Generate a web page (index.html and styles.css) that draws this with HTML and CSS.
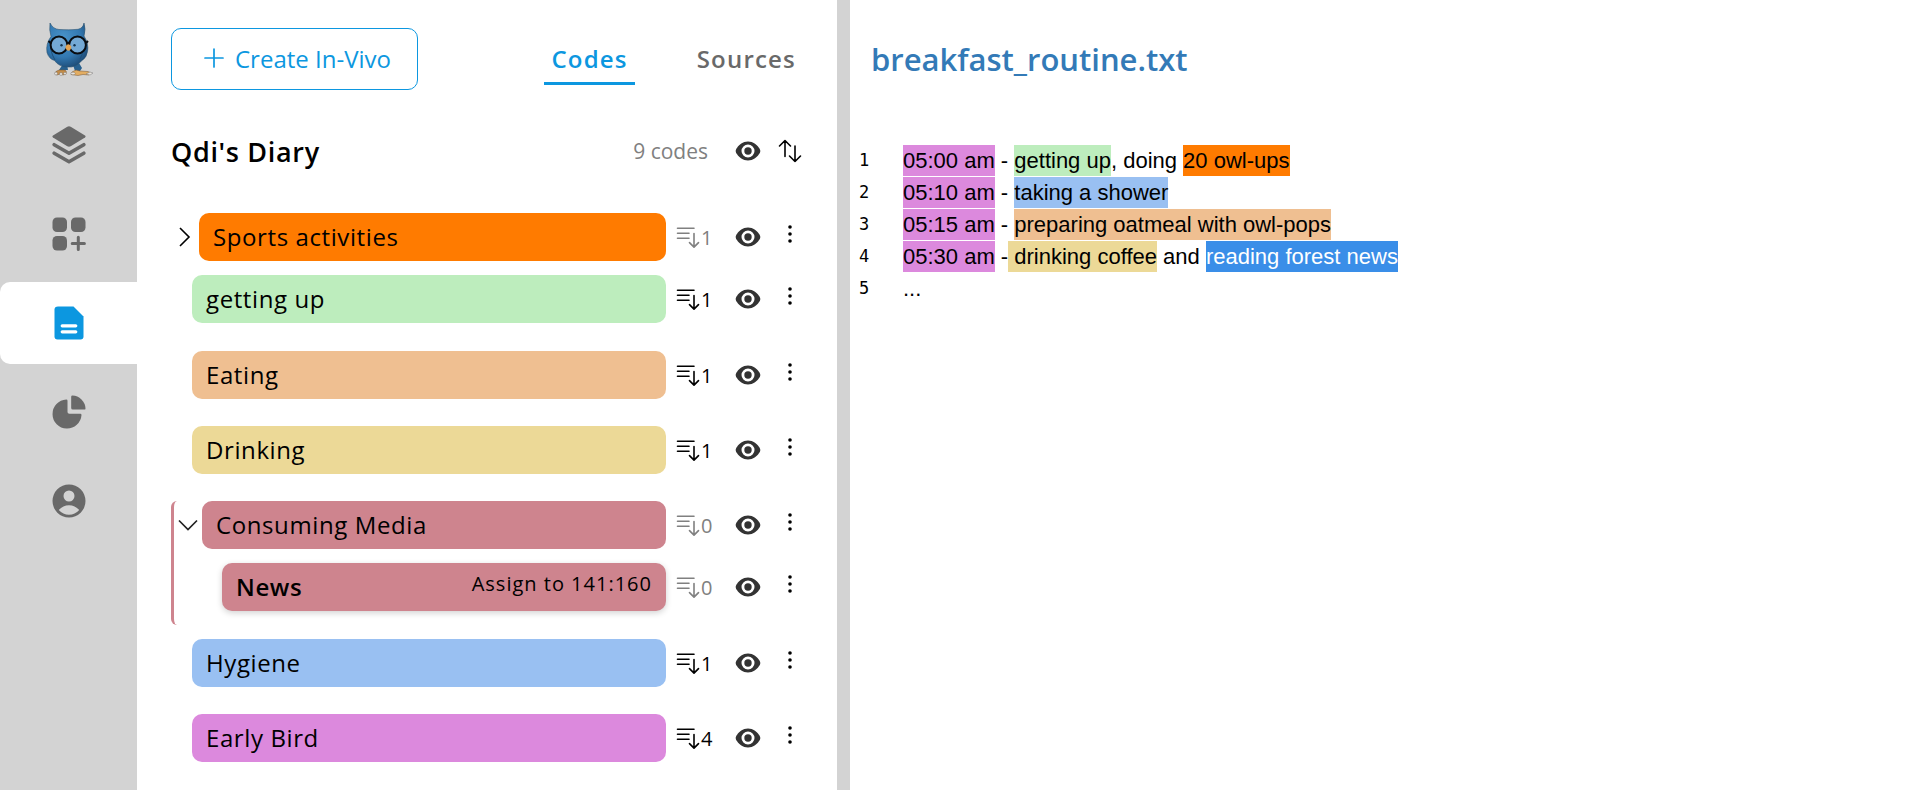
FILE: index.html
```html
<!DOCTYPE html>
<html lang="en">
<head>
<meta charset="utf-8">
<title>Qdi's Diary - Coding</title>
<link rel="stylesheet" href="styles.css">
</head>
<body>
<svg class="sprite" aria-hidden="true">
  <symbol id="i-eye" viewBox="0 0 26 20"><path fill="#333" fill-rule="evenodd" d="M.7 10C.7 8.800 1.200 7.900 2.100 6.700 4.200 3.700 7.700.5 13 .5s8.800 3.200 10.900 6.200c.9 1.200 1.400 2.100 1.400 3.300s-.5 2.100-1.400 3.300c-2.100 3-5.600 6.200-10.900 6.200s-8.800-3.200-10.900-6.200C1.200 12.100.7 11.200.7 10ZM13 3.500a6.500 6.500 0 1 0 0 13 6.500 6.500 0 0 0 0-13Z"/><circle cx="13" cy="10" r="3.700" fill="#333"/></symbol>
  <symbol id="i-list" viewBox="0 0 24 24"><g fill="none" stroke="currentColor" stroke-width="1.600" stroke-linecap="round" stroke-linejoin="round"><path d="M1.500 3.300h16.500M1.500 8.200h11.500M1.500 13.200h11.500M18 8.500v13.300M13.500 17.600l4.500 4.500 4.500-4.500"/></g></symbol>
  <symbol id="i-dots" viewBox="0 0 8 24"><circle cx="4" cy="2" r="1.800"/><circle cx="4" cy="9" r="1.800"/><circle cx="4" cy="16" r="1.800"/></symbol>
</svg>
<div class="app">
  <nav class="rail" aria-label="Main">
    <a class="logo" href="#" aria-label="Home">
      <svg width="50" height="56" viewBox="0 0 50 56">
        <defs>
          <radialGradient id="owl" cx=".4" cy=".35" r=".7"><stop offset="0" stop-color="#4a94cb"/><stop offset=".6" stop-color="#3379b2"/><stop offset="1" stop-color="#1d4a75"/></radialGradient>
        </defs>
        <path d="M19 43l-4 6h9l-1-6ZM29 44l2 6h5l2-3-3-5Z" fill="#27608f"/>
        <path d="M11 53q0-3 4-4h6q2 1 1 4l-3 1-3-1-3 1Z" fill="#c48d4a" stroke="#765433" stroke-width=".5"/>
        <path d="M28 51l4-2 4 1 8 .5 3 1.500-2 2-6-.5-5 1-7-1Z" fill="#e3ad62" stroke="#765433" stroke-width=".5"/>
        <g fill="#e8e4df" stroke="#666" stroke-width=".4"><circle cx="12" cy="52.500" r="1.500"/><circle cx="17" cy="53" r="1.500"/><circle cx="21" cy="52.500" r="1.300"/><ellipse cx="29" cy="52.500" rx="2.200" ry="1.300"/><path d="M42 53l4-2 3 1-3 2Z"/></g>
        <path d="M6 2q3 6 9 6.500 10 .8 19-.2 5-1 6-6.300 2 6 0 13 5 8 3.500 15.500Q42.500 37 38 39.500 31 47 24 46 15 46 10.500 39.500 5 38 3 31.500 1.500 23 7 15.500 5 9 6 2Z" fill="url(#owl)" stroke="#28516f" stroke-width=".6"/>
        <path d="M7 20Q5 29 11 39M39 20q2 9-3 18" fill="none" stroke="#1c4c75" stroke-width=".9"/>
        <g fill="#74a9d5" stroke="#090d12" stroke-width="2"><circle cx="15" cy="24" r="8.400"/><circle cx="33.500" cy="24" r="8.400"/></g>
        <path d="M23 22.500q1.500-1.500 3 0M6.500 22l-2-2M42 22l2-2" fill="none" stroke="#090d12" stroke-width="2"/>
        <circle cx="17.500" cy="24.300" r="1.200" fill="#14334d"/><circle cx="30.500" cy="24.300" r="1.200" fill="#14334d"/>
        <path d="M21.500 25.500q2.700-4.500 5.800 0-.2 4-3 4.300-2.600-.6-2.800-4.300Z" fill="#e3a352"/>
      </svg>
    </a>
    <a class="rail-item" href="#" aria-label="Projects">
      <svg width="34" height="38" viewBox="0 0 34 38"><path d="M15.300.7q1.700-.9 3.400 0L33 9.600q1.200 1 0 2L18.700 20.300q-1.700.9-3.400 0L1 11.600q-1.200-1 0-2Z"/><path d="M2.200 18.700 17 27.200l14.800-8.500M2.200 27.200 17 35.700l14.800-8.500" fill="none" stroke="#696969" stroke-width="3.600" stroke-linecap="round" stroke-linejoin="round"/></svg>
    </a>
    <a class="rail-item" href="#" aria-label="Preparation">
      <svg width="34" height="34" viewBox="0 0 34 34"><rect x=".5" y=".5" width="14.500" height="14.500" rx="4.500"/><rect x="19" y=".5" width="14.500" height="14.500" rx="4.500"/><rect x=".5" y="19" width="14.500" height="14.500" rx="4.500"/><path d="M26.300 20.300v12.200M20.200 26.400h12.200" fill="none" stroke="#696969" stroke-width="3" stroke-linecap="round"/></svg>
    </a>
    <a class="rail-item active" href="#" aria-label="Coding" aria-current="page">
      <svg width="30" height="34" viewBox="0 0 30 34"><path d="M4 .5h15.500L29.500 10.500V30.500q0 3-3 3H3.500q-3 0-3-3v-27q0-3 3.500-3Z"/><path d="M8.200 19.800h13.600M8.200 25.800h13.600" stroke="#fff" stroke-width="3.200" stroke-linecap="round"/></svg>
    </a>
    <a class="rail-item" href="#" aria-label="Analysis">
      <svg width="34" height="34" viewBox="0 0 34 34"><path d="M14.300 4.500q1.200 0 1.200 1.200V17q0 1.800 1.800 1.800h11q1.200 0 1.200 1.200A14.500 14.500 0 1 1 14.300 4.500Z"/><path d="M19.200 1.800Q19.200.6 20.400.6A13.500 13.500 0 0 1 33.500 13.400q0 1.200-1.200 1.200H20.700q-1.500 0-1.500-1.500Z"/></svg>
    </a>
    <a class="rail-item" href="#" aria-label="Profile">
      <svg width="34" height="34" viewBox="0 0 34 34"><path fill-rule="evenodd" d="M17 .5a16.500 16.500 0 1 0 0 33 16.500 16.500 0 0 0 0-33ZM17 6.500a5.500 5.500 0 1 1 0 11 5.500 5.500 0 0 1 0-11ZM6.800 26Q11 21.200 17 21.200T27.200 26Q23 30.700 17 30.700T6.800 26Z"/></svg>
    </a>
  </nav>

  <section class="codes-panel">
    <header class="panel-head">
      <button class="create" type="button"><svg width="20" height="20" viewBox="0 0 20 20"><path d="M10 1v18M1 10h18" stroke="currentColor" stroke-width="1.700" stroke-linecap="round"/></svg>Create In-Vivo</button>
      <div class="tabs" role="tablist">
        <button class="tab selected" type="button" role="tab" aria-selected="true">Codes</button>
        <button class="tab" type="button" role="tab" aria-selected="false">Sources</button>
      </div>
    </header>

    <div class="project">
      <h2>Qdi's Diary</h2>
      <span class="total">9 codes</span>
      <button class="icon-btn eye" type="button" aria-label="Toggle all"><svg width="26" height="20"><use href="#i-eye"/></svg></button>
      <button class="icon-btn more" type="button" aria-label="Sort"><svg width="24" height="24" viewBox="0 0 24 24"><path d="M7 17.500V1.500M1.500 7 7 1.500l5.500 5.500M17 7v15.500M11.500 17l5.500 5.500 5.500-5.500" fill="none" stroke="#000" stroke-width="1.600" stroke-linecap="round" stroke-linejoin="round"/></svg></button>
    </div>

    <ul class="codes">
      <li class="row folded">
        <button class="fold" type="button" aria-label="Expand"><svg width="12" height="20" viewBox="0 0 12 20"><path d="M1 1 10 10l-9 9" fill="none" stroke="#000" stroke-width="1.600"/></svg></button>
        <button class="code orange" type="button">Sports activities</button>
        <span class="count muted"><svg width="24" height="24"><use href="#i-list"/></svg>1</span>
        <button class="icon-btn eye" type="button" aria-label="Toggle"><svg width="26" height="20"><use href="#i-eye"/></svg></button>
        <button class="icon-btn more" type="button" aria-label="More"><svg width="8" height="24"><use href="#i-dots"/></svg></button>
      </li>
      <li class="row last">
        <button class="code green" type="button">getting up</button>
        <span class="count"><svg width="24" height="24"><use href="#i-list"/></svg>1</span>
        <button class="icon-btn eye" type="button" aria-label="Toggle"><svg width="26" height="20"><use href="#i-eye"/></svg></button>
        <button class="icon-btn more" type="button" aria-label="More"><svg width="8" height="24"><use href="#i-dots"/></svg></button>
      </li>
      <li class="row single">
        <button class="code peach" type="button">Eating</button>
        <span class="count"><svg width="24" height="24"><use href="#i-list"/></svg>1</span>
        <button class="icon-btn eye" type="button" aria-label="Toggle"><svg width="26" height="20"><use href="#i-eye"/></svg></button>
        <button class="icon-btn more" type="button" aria-label="More"><svg width="8" height="24"><use href="#i-dots"/></svg></button>
      </li>
      <li class="row single">
        <button class="code sand" type="button">Drinking</button>
        <span class="count"><svg width="24" height="24"><use href="#i-list"/></svg>1</span>
        <button class="icon-btn eye" type="button" aria-label="Toggle"><svg width="26" height="20"><use href="#i-eye"/></svg></button>
        <button class="icon-btn more" type="button" aria-label="More"><svg width="8" height="24"><use href="#i-dots"/></svg></button>
      </li>
      <li class="group">
        <div class="row open">
          <button class="fold" type="button" aria-label="Collapse"><svg width="20" height="12" viewBox="0 0 20 12"><path d="M1 1.500 10 10.500l9-9" fill="none" stroke="#222" stroke-width="1.700"/></svg></button>
          <button class="code rose" type="button">Consuming Media</button>
          <span class="count muted"><svg width="24" height="24"><use href="#i-list"/></svg>0</span>
          <button class="icon-btn eye" type="button" aria-label="Toggle"><svg width="26" height="20"><use href="#i-eye"/></svg></button>
          <button class="icon-btn more" type="button" aria-label="More"><svg width="8" height="24"><use href="#i-dots"/></svg></button>
        </div>
        <div class="row child">
          <button class="code rose hover" type="button"><span>News</span><span class="assign">Assign to 141:160</span></button>
          <span class="count muted"><svg width="24" height="24"><use href="#i-list"/></svg>0</span>
          <button class="icon-btn eye" type="button" aria-label="Toggle"><svg width="26" height="20"><use href="#i-eye"/></svg></button>
          <button class="icon-btn more" type="button" aria-label="More"><svg width="8" height="24"><use href="#i-dots"/></svg></button>
        </div>
      </li>
      <li class="row single">
        <button class="code blue" type="button">Hygiene</button>
        <span class="count"><svg width="24" height="24"><use href="#i-list"/></svg>1</span>
        <button class="icon-btn eye" type="button" aria-label="Toggle"><svg width="26" height="20"><use href="#i-eye"/></svg></button>
        <button class="icon-btn more" type="button" aria-label="More"><svg width="8" height="24"><use href="#i-dots"/></svg></button>
      </li>
      <li class="row single">
        <button class="code orchid" type="button">Early Bird</button>
        <span class="count"><svg width="24" height="24"><use href="#i-list"/></svg>4</span>
        <button class="icon-btn eye" type="button" aria-label="Toggle"><svg width="26" height="20"><use href="#i-eye"/></svg></button>
        <button class="icon-btn more" type="button" aria-label="More"><svg width="8" height="24"><use href="#i-dots"/></svg></button>
      </li>
    </ul>
  </section>

  <div class="splitter" role="separator"></div>

  <main class="editor">
    <h1>breakfast_routine.txt</h1>
    <ol class="lines">
      <li><span class="num">1</span><p><mark class="orchid">05:00 am</mark> - <mark class="green">getting up</mark>, doing <mark class="orange">20 owl-ups</mark></p></li>
      <li><span class="num">2</span><p><mark class="orchid">05:10 am</mark> - <mark class="blue">taking a shower</mark></p></li>
      <li><span class="num">3</span><p><mark class="orchid">05:15 am</mark> - <mark class="peach">preparing oatmeal with owl-pops</mark></p></li>
      <li><span class="num">4</span><p><mark class="orchid">05:30 am</mark> -<mark class="sand"> drinking coffee</mark> and <mark class="picked">reading forest news</mark></p></li>
      <li><span class="num">5</span><p>...</p></li>
    </ol>
  </main>
</div>
</body>
</html>
```
FILE: styles.css
```css
* { box-sizing: border-box; }
body { margin: 0; background: #fff; color: #000; font-family: "Open Sans", sans-serif; }
button { margin: 0; padding: 0; border: 0; background: none; color: inherit; font: inherit; cursor: pointer; }
h1, h2, p, ul, ol { margin: 0; padding: 0; }
ul, ol { list-style: none; }
svg { display: block; flex: none; }
.sprite { position: absolute; width: 0; height: 0; }
.app { display: flex; min-height: 100vh; }

.rail { flex: 0 0 137px; display: flex; flex-direction: column; gap: 7px; background: #d3d3d3; }
.logo { display: flex; justify-content: center; height: 97px; padding-top: 21px; }
.rail-item { display: flex; align-items: center; justify-content: center; height: 82px; fill: #696969; }
.rail-item.active { background: #fff; fill: #0c97e0; border-radius: 10px 0 0 10px; }

.codes-panel { flex: 0 0 700px; padding: 28px 34px 24px; }
.panel-head { display: flex; justify-content: space-between; align-items: center; }
.create { display: flex; align-items: center; gap: 11px; width: 247px; height: 62px; padding: 0 0 2px 32px; border: 1px solid #0c97e0; border-radius: 10px; color: #0c97e0; font-size: 24px; white-space: nowrap; }
.tabs { display: flex; gap: 55px; }
.tab { height: 52px; padding: 1px 7px 0; border-bottom: 3px solid transparent; color: #696969; font-size: 24px; font-weight: 600; line-height: 47px; letter-spacing: .05em; }
.tab.selected { border-bottom-color: #0c97e0; color: #0c97e0; }

.project { display: flex; align-items: center; height: 48px; margin-top: 37px; padding-right: 1px; }
.project h2 { flex: 1; font-size: 27px; font-weight: 600; letter-spacing: .025em; }
.total { color: #808080; font-size: 21px; }
.icon-btn { display: flex; align-items: center; justify-content: center; height: 32px; }
.eye { width: 26px; }
.more { width: 24px; margin-left: 17px; }
.project .eye { margin-left: 27px; }

.codes { margin-top: 38px; padding-right: 1px; }
.row { display: flex; align-items: center; padding-left: 21px; margin-bottom: 14px; }
.row.folded { padding-left: 8px; }
.row.last { margin-bottom: 28px; }
.row.single { margin-bottom: 27px; }
.folded .fold { width: 20px; }
.open .fold { width: 24px; }
.row.open { padding-left: 4px; }
.row.child { padding-left: 48px; margin-bottom: 0; }
.group { padding-bottom: 14px; margin-bottom: 14px; border-left: 3px solid #ce848e; border-radius: 6px; }
.code { flex: 1; display: flex; justify-content: space-between; height: 48px; padding: 0 14px; border-radius: 10px; font-size: 24px; line-height: 48px; letter-spacing: .025em; }
.code.hover { font-weight: 600; box-shadow: 0 2px 6px rgba(0, 0, 0, .18); }
.assign { font-size: 20px; font-weight: 400; line-height: 42px; letter-spacing: .05em; }
.count { display: flex; align-items: center; gap: 1px; width: 59px; margin: 0 0 0 10px; font-size: 20px; }
.muted { color: #808080; }

.splitter { flex: 0 0 13px; background: #d3d3d3; cursor: col-resize; }
.editor { flex: 1; min-width: 0; padding: 35px 9px; }
.editor h1 { padding-left: 12px; color: #337ab7; font-size: 31px; font-weight: 600; line-height: 48px; }
.lines { margin-top: 62px; }
.lines li { display: flex; line-height: 32px; }
.num { width: 44px; font: 17px/30px "DejaVu Sans Mono", monospace; }
.lines p { font-family: "Liberation Sans", sans-serif; font-size: 22px; white-space: pre-wrap; }
mark { padding: 3px 0; color: inherit; }

.orange { background: #ff7b00; }
.green { background: #bdedbd; }
.peach { background: #efbf91; }
.sand { background: #ecd997; }
.rose { background: #ce848e; }
.blue { background: #99c0f2; }
.orchid { background: #dc89dd; }
.picked { background: #3a8ee8; color: #fff; }
```
